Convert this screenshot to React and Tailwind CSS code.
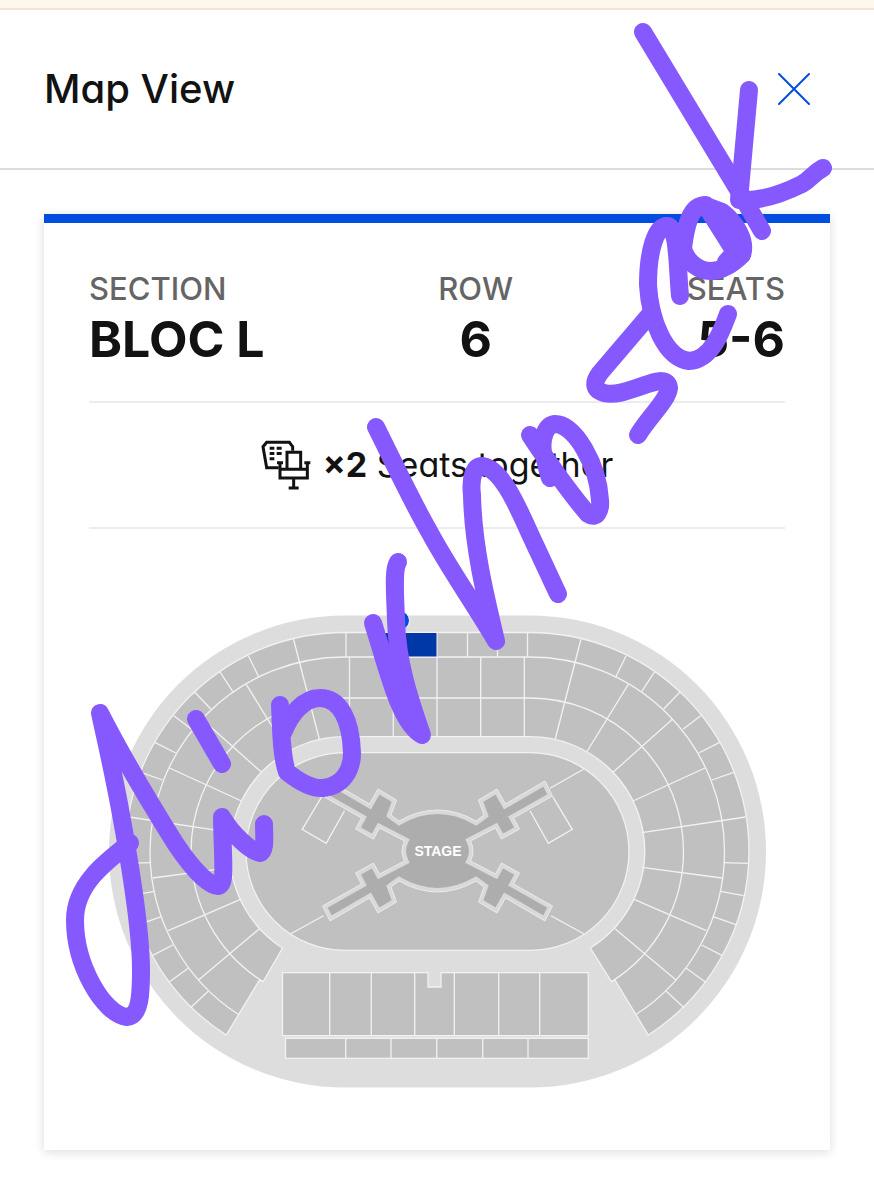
import React from 'react';

const details = [
  { label: 'SECTION', value: 'BLOC L', align: 'text-left' },
  { label: 'ROW', value: '6', align: 'text-center' },
  { label: 'SEATS', value: '5-6', align: 'text-right' },
];

// Dividers of the right-hand stand, mirrored for the left one
const standLines = [
  'M581 639L555 740',
  'M626 656L615.5 677.5',
  'M654.7 671.5L641.7 691.7',
  'M680 692L663.7 709',
  'M700.7 715.7L683.3 729',
  'M719.7 742.3L698.7 753',
  'M733.7 772.3L712 780',
  'M745.5 817L642 832.7',
  'M628.3 684.3L586.7 752',
  'M672.7 719L613.3 772',
  'M705 768L633 801',
  'M723.7 862.7L748.5 863.3',
  'M642.3 867.3L721.7 878',
  'M720.3 891.3L743.5 895.7',
  'M634 899.3L706.3 930.7',
  'M713 916.7L736 924.7',
  'M701.7 945L722.3 955.7',
  'M686.3 968.3L705.3 982',
  'M615 928.7L676 980',
  'M666.3 991.3L684 1007.7',
].join('');

const fieldLines = [
  'M583.5 769.3L550 788.3',
  'M583.7 933.7L551 915.7',
  'M530 810.7L548.3 843.3L572.3 829.3L552.7 796.7',
].join('');

// One quarter of the stage outline, relative to its centre
const arm = [
  [38.5, -30], [46.5, -36], [41, -51], [59.5, -62], [68, -47], [107.5, -70],
  [115, -55], [76, -33], [82, -22], [64, -12], [58, -23], [33, -10],
];

const toPoints = (points, sx, sy) => points.map(([x, y]) => `L${437.5 + x * sx} ${851 + y * sy}`).join('');
const reversedArm = [...arm].reverse();

const stagePath = [
  'M399 821Q437.5 799 476 821',
  toPoints(arm, 1, 1),
  'Q475.5 851 470.5 861',
  toPoints(reversedArm, 1, -1),
  'Q437.5 903 399 881',
  toPoints(arm, -1, -1),
  'Q399.5 851 404.5 841',
  toPoints(reversedArm, -1, 1),
  'Z',
].join('');

const strokes = [
  'M130 843C105 862 75 885 75 920C75 965 103 1014 127 1017C141 1016 141 990 141 970C141 930 131 870 122 820C114 775 108 750 100 713C120 752 150 803 175 843C195 873 210 886 218 886C226 884 223 868 222 817C232 834 250 851 260 853C266 851 264 836 264 824',
  'M196 719L222 764',
  'M280 705C281 725 281 755 287 772C297 780 310 789 323 788C343 786 352 770 352 753C351 720 340 698 320 698C303 698 290 715 283 733',
  'M398 562C393 570 395 590 396 620C397 660 408 695 422 735C400 724 388 670 373 623',
  'M376 427C395 465 410 498 430 533C450 570 475 605 496 641C485 595 473 545 472 495C470 478 474 466 482 466C500 468 515 500 530 534L558 594',
  'M530 435C545 458 573 497 588 514C597 520 601 510 600 500C598 465 575 424 555 424C545 425 541 440 543 452C546 462 547 470 550 478',
  'M638 435C648 418 668 400 669 388C668 378 658 381 648 384C630 390 616 396 604 393C592 389 594 381 600 373L652 312',
  'M728 314C722 330 712 360 689 361C665 358 650 320 648 285C648 250 656 226 667 226C678 226 677 262 680 296',
  'M706 205C690 205 686 225 683 248C686 262 700 272 712 271C725 270 735 262 742 255C747 240 735 222 722 212L706 206L735 252L726 262',
  'M643 32L739 191L762 231',
  'M749 90L739 200C765 202 790 190 802 184C812 178 812 174 823 168',
];

const SeatsIcon = () => (
  <svg viewBox="655 570 150 150" className="size-[50px] shrink-0" fill="none" stroke="#121212" strokeWidth="9" aria-hidden="true">
    <path d="M750 602V590L740 577H672L661 590L672 653H708" />
    <path d="M681 594.5H695M702 594.5H717M681 610.5H695M702 610.5H717M681 626.5H695" />
    <path d="M733 658V607H774V658" />
    <path d="M712 638V684H794V638M712 658H794M703 638H721M785 638H803" />
    <path d="M753 684V714M738 714H768" />
  </svg>
);

const SeatMap = () => (
  <svg viewBox="89 604 696 494" className="mt-[75px] block w-full" role="img" aria-label="Seat map">
    <defs>
      <clipPath id="stage-clip">
        <path d={stagePath} />
      </clipPath>
    </defs>
    <rect x="109" y="615.5" width="657" height="472" rx="236" fill="#dddddd" />

    <g fill="#c0c0c0" stroke="#f2f2f2" strokeWidth="1.3">
      <path d="M344.5 632.5H530A219 219 0 0 1 749 851.5A219 219 0 0 1 648.3 1035L615 980L611.4 981.7L590.3 948A114.8 114.8 0 0 0 644.8 851.5A114.8 114.8 0 0 0 530 736.7H344.5A114.8 114.8 0 0 0 229.7 851.5A114.8 114.8 0 0 0 282.5 948L263.1 981.7L259.5 980L226.2 1035A219 219 0 0 1 125.5 851.5A219 219 0 0 1 344.5 632.5Z" />
      <path fill="none" d="M238.9 1014.8A194.5 194.5 0 0 1 150 851.5A194.5 194.5 0 0 1 344.5 657H530A194.5 194.5 0 0 1 724.5 851.5A194.5 194.5 0 0 1 635.6 1014.8" />
      <path fill="none" d="M263.1 981.7A153.5 153.5 0 0 1 191 851.5A153.5 153.5 0 0 1 344.5 698H530A153.5 153.5 0 0 1 683.5 851.5A153.5 153.5 0 0 1 611.4 981.7" />
      <path fill="none" d={standLines} />
      <path fill="none" d={standLines} transform="matrix(-1 0 0 1 874.5 0)" />
      <path d="M346 632.5V657M377 632.5V657M467.5 632.5V657M497.5 632.5V657M527.5 632.5V657" />
      <path d="M349.5 657V736.7M393.3 657V736.7M437 657V736.7M480.7 657V736.7M524.3 657V736.7" />
      <rect x="246" y="752.7" width="383" height="197.6" rx="98.8" />
      <path fill="none" d={fieldLines} />
      <path fill="none" d={fieldLines} transform="matrix(-1 0 0 1 874.5 0)" />
      <path d="M282.5 972.7H428V987H441V972.7H588.3V1035.7H282.5Z" />
      <path d="M329.7 973V1035M371.3 973V1035M414.7 973V1035M454.3 973V1035M498.7 973V1035M539.7 973V1035" />
      <rect x="285.5" y="1038.3" width="302.8" height="20" />
      <path d="M345.7 1038V1058M391 1038V1058M436.7 1038V1058M482.7 1038V1058M528 1038V1058" />
    </g>

    <rect x="377" y="632.5" width="60" height="24.5" fill="#0038a8" stroke="#f2f2f2" strokeWidth="1" />
    <circle cx="400" cy="620.5" r="9.5" fill="#024ddf" stroke="#ffffff" strokeWidth="1" />

    <path d={stagePath} fill="#adadad" stroke="#d9d9d9" strokeWidth="8" clipPath="url(#stage-clip)" />
    <path d={stagePath} fill="none" stroke="#ebebeb" strokeWidth="1" />
    <text x="438" y="856" textAnchor="middle" fill="#ffffff" className="font-['Liberation_Sans',sans-serif] text-[14px] font-bold">
      STAGE
    </text>
  </svg>
);

const App = () => (
  <div className="relative min-h-screen overflow-hidden bg-white font-[Inter,sans-serif] text-[#121212] [font-feature-settings:'cv11']">
    <div className="h-2.5 border-b-2 border-[#f3e3da] bg-[#fef7ee]" />

    <header className="flex h-40 items-center justify-between border-b-2 border-[#dcdcdc] pl-11 pr-12">
      <h1 className="text-[40px] leading-12 font-medium">Map View</h1>
      <button type="button" aria-label="Close" className="p-4">
        <svg viewBox="0 0 32 32" className="size-8" fill="none" stroke="#024ddf" strokeWidth="2" strokeLinecap="round">
          <path d="M1 1L31 31M31 1L1 31" />
        </svg>
      </button>
    </header>

    <main className="px-11 pt-11 pb-12">
      <section className="border-t-[9px] border-[#024ddf] bg-white px-[45px] pt-[46px] pb-[52px] shadow-[0_2px_10px_rgba(0,0,0,0.14)]">
        <dl className="flex justify-between border-b-2 border-[#ececec] pb-8">
          {details.map(({ label, value, align }) => (
            <div key={label} className={align}>
              <dt className="text-[31px] leading-10 font-medium text-[#656565]">{label}</dt>
              <dd className="text-[50px] leading-[60px] font-bold">{value}</dd>
            </div>
          ))}
        </dl>

        <div className="flex h-[126px] items-center justify-center gap-3 border-b-2 border-[#ececec]">
          <SeatsIcon />
          <p className="text-[34px] leading-10">
            <span className="font-bold">×2</span> Seats together
          </p>
        </div>

        <SeatMap />
      </section>
    </main>

    <svg
      viewBox="0 0 874 1199"
      className="pointer-events-none absolute top-0 left-0 w-full"
      fill="none"
      stroke="#8659ff"
      strokeWidth="18"
      strokeLinecap="round"
      strokeLinejoin="round"
      aria-hidden="true"
    >
      {strokes.map((d) => (
        <path key={d} d={d} />
      ))}
    </svg>
  </div>
);

export default App;
